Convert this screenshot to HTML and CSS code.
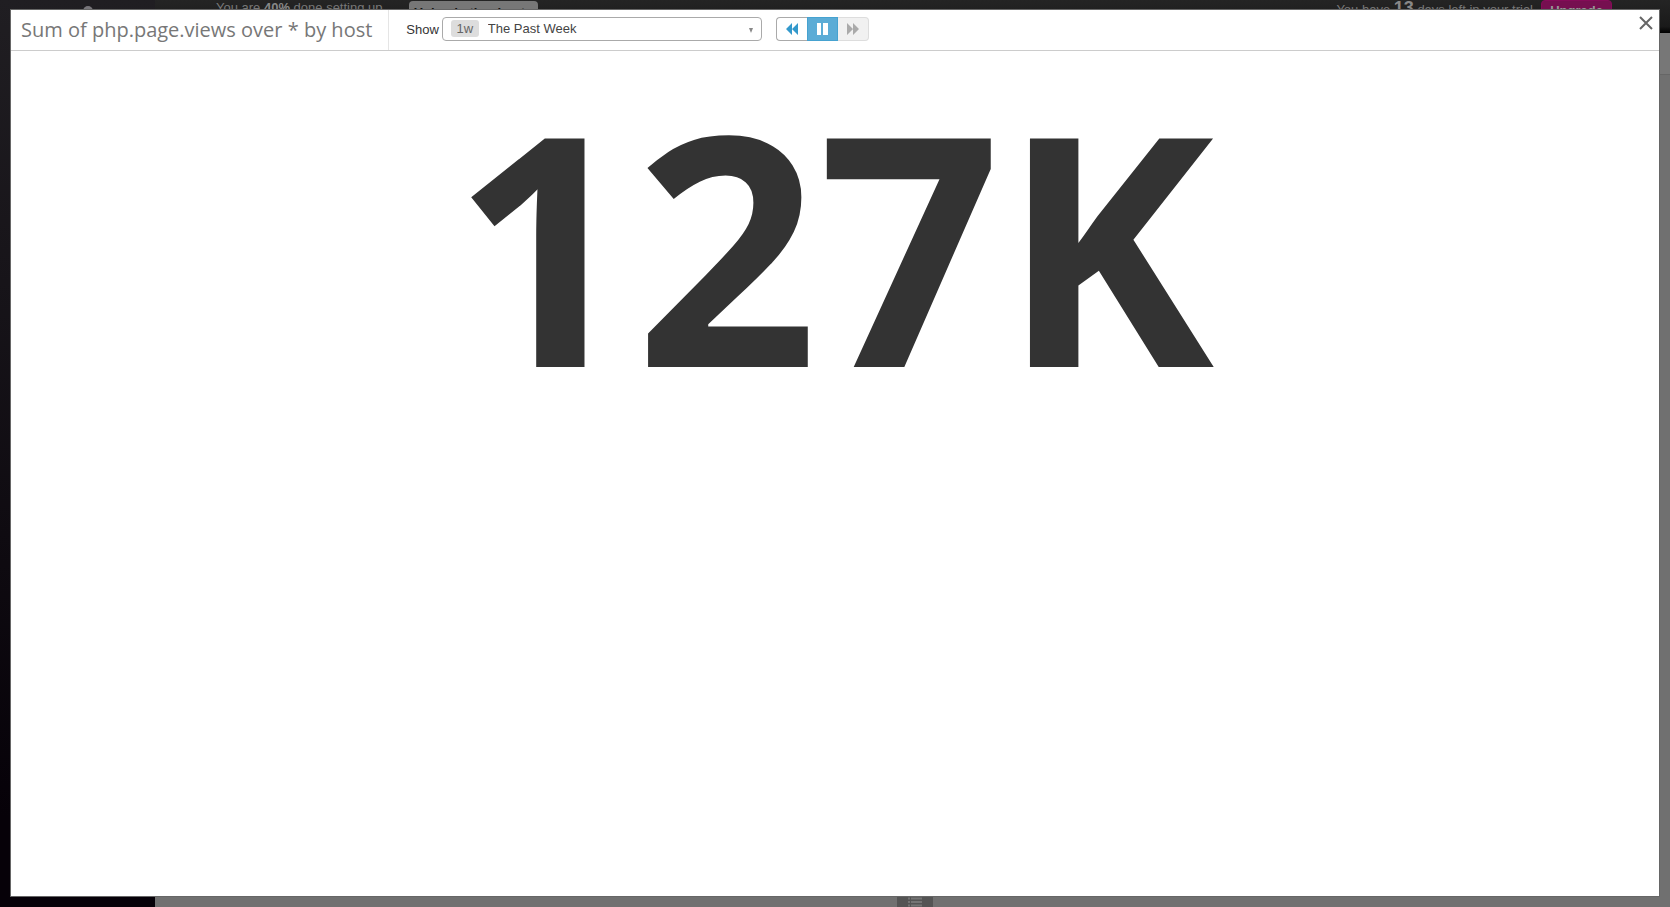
FILE: index.html
```html
<!DOCTYPE html>
<html lang="en">
<head>
<meta charset="utf-8">
<title>Sum of php.page.views over * by host</title>
<link rel="stylesheet" href="styles.css">
</head>
<body>
<div class="app">
  <aside class="sidebar"><span class="logo"></span></aside>
  <div class="page">
    <header class="topbar">
      <span class="setup">You are <b>40%</b> done setting up</span>
      <button class="next-step" type="button">Upload other hosts</button>
      <span class="trial">You have <b class="days">13</b> days left in your trial</span>
      <button class="upgrade" type="button">Upgrade</button>
    </header>
    <div class="subbar"></div>
    <main class="board">
      <button class="tray" type="button" aria-label="Widget list">
        <svg width="14" height="12" viewBox="0 0 14 12"><path d="M0 1.500h2M3 1.500h11M0 5h2M3 5h11M0 8.500h2M3 8.500h11" stroke="#747474" stroke-width="2"/></svg>
      </button>
    </main>
  </div>
</div>

<section class="modal" role="dialog" aria-labelledby="graph-title">
  <header class="modal-head">
    <h1 class="title" id="graph-title">Sum of php.page.views over * by host</h1>
    <div class="tools">
      <label class="show" for="range">Show</label>
      <div class="range">
        <select class="range-select" id="range"><option>The Past Week</option></select>
        <span class="badge">1w</span>
        <svg class="caret" width="4" height="5" viewBox="0 0 4 5"><path d="M0 0h4L2 5z" fill="#888"/></svg>
      </div>
      <div class="player">
        <button class="step back" type="button" aria-label="Back">
          <svg width="12" height="12" viewBox="0 0 12 12"><path d="M6 0v12L0 6zM12 0v12L6 6z" fill="#3399cc"/></svg>
        </button>
        <button class="step pause" type="button" aria-label="Pause">
          <svg width="12" height="12" viewBox="0 0 12 12"><path d="M1 0h4v12H1zM7 0h5v12H7z" fill="#fff"/></svg>
        </button>
        <button class="step forward" type="button" aria-label="Forward" disabled>
          <svg width="12" height="12" viewBox="0 0 12 12"><path d="M0 0v12l6-6zM6 0v12l6-6z" fill="#aaa"/></svg>
        </button>
      </div>
    </div>
    <button class="close" type="button" aria-label="Close">
      <svg width="14" height="14" viewBox="0 0 14 14"><path d="M1 1l12 12M13 1L1 13" stroke="#666" stroke-width="2"/></svg>
    </button>
  </header>
  <div class="value">127K</div>
</section>
</body>
</html>
```
FILE: styles.css
```css
* { box-sizing: border-box; }
body {
  margin: 0;
  font: 13px/16px "Liberation Sans", Arial, sans-serif;
  color: #333;
}
button { margin: 0; padding: 0; border: 0; font: inherit; }
svg { display: block; }

.app { display: flex; height: 100vh; overflow: hidden; background: #707070; }
.sidebar {
  flex: 0 0 155px;
  display: flex;
  justify-content: center;
  align-items: flex-start;
  padding: 6px 0 0 20px;
  background: linear-gradient(#201e22, #060108 90%);
}
.logo { width: 10px; height: 10px; border-radius: 50%; background: #77757a; }
.page { flex: 1; display: flex; flex-direction: column; }
.topbar {
  display: flex;
  align-items: flex-start;
  height: 33px;
  padding: 0 58px 0 61px;
  background: linear-gradient(#242424, #1a1a1a 80%, #000);
  color: #777;
  white-space: nowrap;
}
.setup b { color: #888; }
.next-step {
  width: 129px;
  height: 24px;
  margin: 1px auto 0 26px;
  border-radius: 4px;
  background: #777;
  color: #111;
  font-weight: bold;
  line-height: 24px;
}
.trial { line-height: 16px; }
.days { font-size: 18px; line-height: 16px; color: #888; }
.upgrade {
  width: 71px;
  height: 22px;
  margin-left: 8px;
  border: 1px solid #850b58;
  border-radius: 4px;
  background: #760f50;
  color: #999;
  font-weight: bold;
}
.subbar { height: 42px; border-bottom: 1px solid #666; background: #777; }
.board {
  flex: 1;
  display: flex;
  align-items: flex-end;
  justify-content: center;
  padding-left: 4px;
}
.tray {
  display: flex;
  justify-content: center;
  width: 36px;
  height: 10px;
  overflow: hidden;
  background: #545454;
}

.modal {
  position: fixed;
  inset: 9px 10px 10px;
  border: 1px solid #666;
  background: #fff;
}
.modal-head {
  display: flex;
  height: 41px;
  border-bottom: 1px solid #ccc;
}
.title {
  margin: 0;
  padding: 0 16px 0 10px;
  border-right: 1px solid #e5e5e5;
  font: 20px/40px "Open Sans", sans-serif;
  color: #777;
  white-space: nowrap;
}
.tools { display: flex; align-items: flex-start; padding: 7px 0 0 17px; }
.show { margin-right: 3px; line-height: 26px; }
.range { position: relative; width: 320px; }
.range-select {
  appearance: none;
  display: block;
  width: 100%;
  height: 24px;
  padding: 0 24px 0 45px;
  border: 1px solid #aaa;
  border-radius: 4px;
  background: #fff;
  font: inherit;
  color: #444;
}
.badge {
  position: absolute;
  top: 3px;
  left: 9px;
  width: 28px;
  border-radius: 3px;
  background: #ddd;
  color: #666;
  line-height: 17px;
  text-align: center;
  pointer-events: none;
}
.caret { position: absolute; top: 11px; right: 9px; pointer-events: none; }
.player { display: flex; margin-left: 14px; }
.step {
  display: grid;
  place-items: center;
  width: 31px;
  height: 24px;
  border: 1px solid #aaa;
  background: #fff;
}
.back { border-right: 0; border-radius: 4px 0 0 4px; }
.pause { border-color: #46a2d0; background: #5bacd6; }
.forward { border-color: #ddd; border-left: 0; border-radius: 0 4px 4px 0; background: #f1f1f1; }
.close { align-self: flex-start; margin: 6px 6px 0 auto; background: none; }
.value {
  margin-top: 20px;
  padding-right: 4px;
  font: bold 320px/344px "Open Sans", sans-serif;
  color: #333;
  text-align: center;
}
```
